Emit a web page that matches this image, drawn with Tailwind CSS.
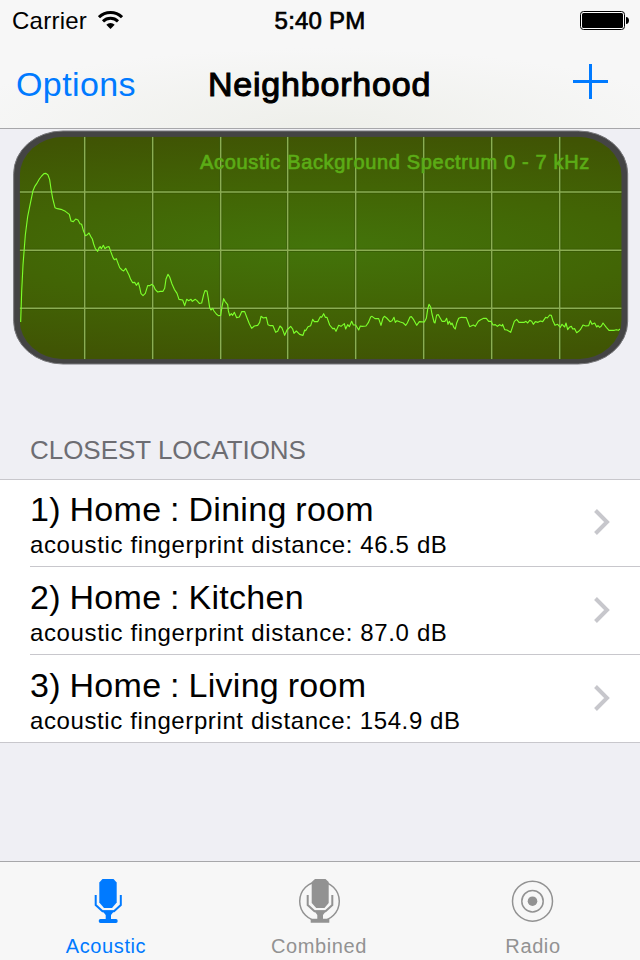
<!DOCTYPE html>
<html lang="en">
<head>
<meta charset="utf-8">
<title>Neighborhood</title>
<script src="https://cdn.jsdelivr.net/npm/@tailwindcss/browser@4"></script>
</head>
<body class="w-[640px] h-[960px] overflow-hidden bg-[#efeff4] font-['Liberation_Sans',Arial,sans-serif] text-black flex flex-col">
  <header class="h-[129px] shrink-0 border-b border-[#a7a7aa] bg-[#f7f7f7] bg-[radial-gradient(ellipse_380px_80px_at_50%_100%,#eeefea,#f7f7f7)]">
    <div class="h-10 pt-px grid grid-cols-3 items-center text-[24px] leading-10">
      <div class="flex items-center pl-3">
        <span class="tracking-[0.25px]">Carrier</span>
        <svg class="ml-[11px] -mt-[2px]" width="25" height="18" viewBox="0 0 25 18" fill="none" stroke="#000" stroke-width="3">
          <path d="M1 6.2a16.5 16.5 0 0 1 23 0"/>
          <path d="M5 10.4a10.8 10.8 0 0 1 15 0"/>
          <path d="M12.5 18 8.3 13.8a6 6 0 0 1 8.4 0z" fill="#000" stroke="none"/>
        </svg>
      </div>
      <span class="text-center [-webkit-text-stroke:0.7px_#000] tracking-[0.2px]">5:40 PM</span>
      <svg class="justify-self-end mr-[10px]" width="50" height="20" viewBox="0 0 50 20">
        <rect x=".5" y=".5" width="44" height="18" rx="3" fill="#fff" stroke="#000"/>
        <rect x="2" y="2" width="41" height="15" rx="1.5"/>
        <path d="M46 6c4 0 4 7 0 7z"/>
      </svg>
    </div>
    <div class="h-[88px] grid grid-cols-[160px_1fr_160px] items-center text-[34px] leading-[40px]">
      <span class="pl-4 text-[#007aff] tracking-[0.4px]">Options</span>
      <span class="-ml-px text-center [-webkit-text-stroke:1.1px_#000] tracking-[0.8px]">Neighborhood</span>
      <svg class="justify-self-end mr-8 -mt-[5px]" width="36" height="36" viewBox="0 0 36 36" fill="#007aff"><path d="M17 0h3v35h-3zM1 16h35v3H1z" /></svg>
    </div>
  </header>

  <svg class="shrink-0" width="640" height="238" viewBox="0 12 1920 714" fill="none">
    <defs>
      <radialGradient id="glow" gradientUnits="userSpaceOnUse" cx="962" cy="368" r="1" gradientTransform="translate(962 368) scale(1900 350) translate(-962 -368)">
        <stop offset="0" stop-color="#43740a"/>
        <stop offset=".5" stop-color="#426505"/>
        <stop offset="1" stop-color="#405404"/>
      </radialGradient>
      <clipPath id="screen"><rect x="59" y="35" width="1806" height="668" rx="132" ry="118"/></clipPath>
    </defs>
    <rect x="41" y="18" width="1842" height="699" rx="148" ry="128" fill="#444" stroke="#77777a" stroke-width="3"/>
    <g clip-path="url(#screen)">
      <rect x="59" y="35" width="1806" height="668" fill="url(#glow)"/>
      <path d="M254 35v668M458 35v668M662 35v668M863 35v668M1067 35v668M1271 35v668M1475 35v668M1679 35v668M59 201h1806M59 376h1806M59 550h1806" stroke="#2f4c04" stroke-opacity=".6" stroke-width="9"/>
      <path d="M254 35v668M458 35v668M662 35v668M863 35v668M1067 35v668M1271 35v668M1475 35v668M1679 35v668M59 201h1806M59 376h1806M59 550h1806" stroke="#8bad53" stroke-width="4.500"/>
      <path stroke="#7cff2b" stroke-width="3.400" stroke-linejoin="round" d="M62 591L65 500 69 420 76 330 83 275 91 235 99 197 104 185 110 176 118 162 125 153 132 146 138 145 144 150 149 164 153 192 158 220 165 248 172 251 183 253 196 259 208 268 213 288 220 290 227 282 234 285 240 296 245 298 250 316 256 332 262 329 267 324 272 334 277 342 281 357 286 371 293 379 298 367 301 365 304 371 310 361 315 371 321 366 327 365 332 379 339 398 343 404 349 401 353 412 359 428 366 435 371 438 377 430 382 440 387 450 392 463 398 473 404 472 409 481 415 473 419 487 423 506 429 512 436 505 443 482 449 482 456 478 461 483 466 494 473 501 481 499 489 499 494 490 498 462 504 448 509 456 516 477 523 493 531 505 537 523 548 525 554 542 560 523 566 527 573 523 577 529 586 523 591 527 598 535 605 534 611 509 615 497 621 498 625 521 629 548 633 555 638 550 642 558 649 567 655 572 662 571 666 545 671 521 675 529 683 539 685 557 689 572 694 566 698 571 703 562 710 578 718 576 725 560 734 560 740 576 748 596 755 610 763 603 773 601 779 592 783 574 790 579 799 577 804 599 811 602 819 602 827 622 833 619 840 603 846 609 850 620 854 631 861 615 872 604 878 612 882 625 889 618 899 628 909 631 914 615 917 617 924 605 932 602 938 583 943 590 953 590 961 575 965 577 971 566 976 577 981 577 989 600 998 611 1003 610 1008 619 1016 601 1023 604 1033 596 1037 612 1043 599 1048 605 1055 589 1060 600 1067 600 1076 615 1081 603 1086 604 1098 603 1105 593 1112 576 1116 574 1125 581 1136 581 1143 601 1149 579 1153 574 1160 579 1170 590 1176 587 1182 577 1186 592 1191 587 1201 591 1210 594 1217 601 1222 594 1230 576 1234 575 1241 584 1250 601 1258 590 1273 591 1279 580 1283 553 1287 538 1292 546 1296 567 1302 591 1305 594 1310 570 1315 569 1320 578 1326 589 1335 589 1340 580 1344 598 1348 589 1353 599 1356 594 1362 608 1366 612 1370 594 1376 580 1384 577 1399 578 1405 594 1409 605 1420 600 1426 604 1435 589 1442 584 1451 580 1459 580 1466 589 1473 589 1479 600 1486 599 1492 604 1499 599 1506 603 1508 598 1514 614 1521 615 1532 622 1538 604 1543 589 1550 583 1557 592 1573 592 1578 589 1583 594 1589 586 1595 589 1600 598 1606 590 1614 592 1621 588 1628 590 1637 577 1642 579 1649 570 1654 571 1659 588 1665 601 1673 598 1681 607 1686 598 1694 606 1698 594 1703 614 1708 607 1714 604 1718 612 1724 611 1730 623 1736 619 1741 614 1749 600 1757 603 1766 602 1771 587 1776 598 1784 594 1790 606 1794 602 1799 607 1804 603 1809 594 1819 607 1827 616 1843 616 1849 614 1855 616 1860 612"/>
      <text x="600" y="132" font-size="60" fill="#5bac16" stroke="#5bac16" stroke-width="2" textLength="1168">Acoustic Background Spectrum 0 - 7 kHz</text>
    </g>
  </svg>

  <h2 class="mt-[67px] h-[45px] pl-[30px] text-[26px] leading-[32px] text-[#6d6d72] tracking-[-0.03px] shrink-0">CLOSEST LOCATIONS</h2>

  <main class="shrink-0 bg-white border-y border-[#c8c7cc]">
    <div class="h-[87px] pl-[30px]"><div class="h-full border-b border-[#c8c7cc] flex items-start justify-between">
      <div class="pt-[9px]"><p class="text-[34px] leading-[40px] tracking-[0.28px] [word-spacing:-1px]">1) Home : Dining room</p><p class="text-[24px] leading-[32px] tracking-[0.63px]">acoustic fingerprint distance: 46.5 dB</p></div>
      <svg class="mt-[28px] mr-[29px]" width="18" height="28" viewBox="0 0 18 28" fill="none" stroke="#c7c7cc" stroke-width="4"><path d="M2.5 2.5 14 14 2.5 25.5"/></svg>
    </div></div>
    <div class="h-[88px] pl-[30px]"><div class="h-full border-b border-[#c8c7cc] flex items-start justify-between">
      <div class="pt-[10px]"><p class="text-[34px] leading-[40px] tracking-[0.28px] [word-spacing:-1px]">2) Home : Kitchen</p><p class="text-[24px] leading-[32px] tracking-[0.63px]">acoustic fingerprint distance: 87.0 dB</p></div>
      <svg class="mt-[29px] mr-[29px]" width="18" height="28" viewBox="0 0 18 28" fill="none" stroke="#c7c7cc" stroke-width="4"><path d="M2.5 2.5 14 14 2.5 25.5"/></svg>
    </div></div>
    <div class="h-[87px] pl-[30px] flex items-start justify-between">
      <div class="pt-[10px]"><p class="text-[34px] leading-[40px] tracking-[0.28px] [word-spacing:-1px]">3) Home : Living room</p><p class="text-[24px] leading-[32px] tracking-[0.61px]">acoustic fingerprint distance: 154.9 dB</p></div>
      <svg class="mt-[29px] mr-[29px]" width="18" height="28" viewBox="0 0 18 28" fill="none" stroke="#c7c7cc" stroke-width="4"><path d="M2.5 2.5 14 14 2.5 25.5"/></svg>
    </div>
  </main>

  <nav class="mt-auto h-[99px] shrink-0 border-t border-[#a7a7aa] bg-[#f7f7f7] grid grid-cols-[212px_214px_214px] text-[20px] leading-6 tracking-[0.6px] text-[#929292]">
    <div class="flex flex-col items-center pt-4 text-[#007aff]">
      <svg width="44" height="48" viewBox="0 0 44 48" fill="currentColor">
        <path d="M18.500 1h11l3.200 3.500v20L28 30h-8l-4.700-5.500v-20z"/>
        <path d="M11.700 17v10l6.800 6.300h11.500l6.800-6.300V17" fill="none" stroke="currentColor" stroke-width="2"/>
        <path d="M18 32.500h12.500L27 37v4h5q1.700 0 1.700 2t-1.700 2H16.500q-1.800 0-1.800-2t1.800-2h5.200v-4z"/>
      </svg>
      <span class="mt-2">Acoustic</span>
    </div>
    <div class="flex flex-col items-center pt-4">
      <svg width="44" height="48" viewBox="0 0 44 48" fill="currentColor">
        <circle cx="22.500" cy="23.200" r="19.800" fill="none" stroke="currentColor" stroke-width="1.500"/>
        <path d="M18 1h10.500l3.200 3v21L27.500 30h-8.300L14.700 25V4z"/>
        <path d="M10.700 17v10l6.800 6.300h11l6.800-6.300V17" fill="none" stroke="currentColor" stroke-width="2"/>
        <path d="M17 32.500h12.500L26 37v3.700h6.300v4H13.700v-4h6.600V37z"/>
      </svg>
      <span class="mt-2">Combined</span>
    </div>
    <div class="flex flex-col items-center pt-4">
      <svg width="44" height="48" viewBox="0 0 44 48" fill="none" stroke="currentColor" stroke-width="1.500">
        <circle cx="21.500" cy="23.200" r="20"/><circle cx="21.500" cy="23.200" r="10.700"/><circle cx="21.500" cy="23.200" r="4.800" fill="currentColor" stroke="none"/>
      </svg>
      <span class="mt-2">Radio</span>
    </div>
  </nav>
</body>
</html>
